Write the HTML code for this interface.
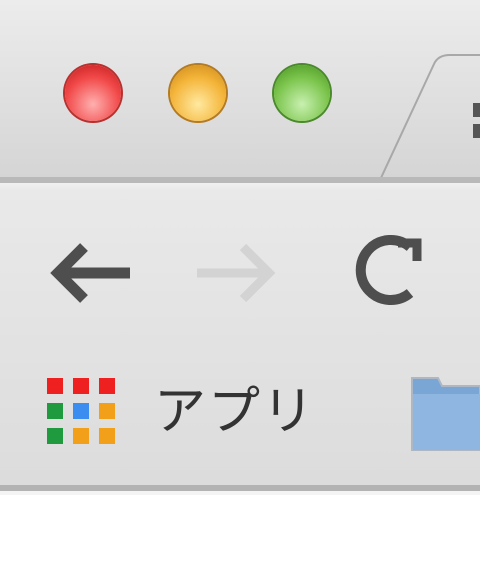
<!DOCTYPE html>
<html><head><meta charset="utf-8"><style>
html,body{margin:0;padding:0;width:480px;height:569px;overflow:hidden;background:#fff;font-family:"Liberation Sans","Noto Sans CJK JP",sans-serif}
.title{position:absolute;left:0;top:0;width:480px;height:177px;background:linear-gradient(#ececec,#d5d5d5)}
.tb{position:absolute;left:0;top:177px;width:480px;height:6px;background:#b9b9b9}
.tool{position:absolute;left:0;top:183px;width:480px;height:302px;background:linear-gradient(#f0f0f0 0px,#e9e9e9 8px,#dcdcdc 300px)}
.bb{position:absolute;left:0;top:485px;width:480px;height:6px;background:#b3b3b3}
.light{position:absolute;left:0;top:491px;width:480px;height:4px;background:#f4f4f4}
.c{position:absolute;width:56px;height:56px;border-radius:50%;top:65px}
.sq{position:absolute;width:16px;height:16px}
</style></head><body>
<div class="title"></div>
<svg style="position:absolute;left:0;top:0" width="480" height="183">
<path d="M380 180 L434 64 Q438 55 450 55 L480 55" fill="none" stroke="#a8a8a8" stroke-width="2"/>
<rect x="473" y="103" width="7" height="14" fill="#555"/>
<rect x="473" y="124" width="7" height="14" fill="#555"/>
</svg>
<div class="c" style="left:65px;background:radial-gradient(circle at 50% 70%,#ffb0b0,#f24a4a 55%,#c01818);box-shadow:0 0 0 2px #b8312f"></div>
<div class="c" style="left:170px;background:radial-gradient(circle at 50% 70%,#ffe9a0,#f4b53a 55%,#c98515);box-shadow:0 0 0 2px #b47b22"></div>
<div class="c" style="left:274px;background:radial-gradient(circle at 50% 70%,#c8f0b0,#7cc54d 55%,#45921f);box-shadow:0 0 0 2px #4b8a2b"></div>
<div class="tb"></div>
<div class="tool"></div>
<div class="bb"></div><div class="light"></div>
<svg style="position:absolute;left:0;top:183px" width="480" height="302">
<path d="M130 90 L62 90 M84 64 L58 90 L84 116" fill="none" stroke="#4e4e4e" stroke-width="11"/>
<path d="M197 90 L266 90 M243 64 L269 90 L243 116" fill="none" stroke="#d3d3d3" stroke-width="9"/>
<path d="M410 64 A30 30 0 1 0 410 110" fill="none" stroke="#4e4e4e" stroke-width="10"/>
<path d="M398 60 L417 60 L417 78" fill="none" stroke="#4e4e4e" stroke-width="9"/>
</svg>
<div class="sq" style="left:47px;top:378px;background:#ee2020"></div>
<div class="sq" style="left:73px;top:378px;background:#ee2020"></div>
<div class="sq" style="left:99px;top:378px;background:#ee2020"></div>
<div class="sq" style="left:47px;top:403px;background:#1f9a3e"></div>
<div class="sq" style="left:73px;top:403px;background:#3b8ef0"></div>
<div class="sq" style="left:99px;top:403px;background:#f2a01a"></div>
<div class="sq" style="left:47px;top:428px;background:#1f9a3e"></div>
<div class="sq" style="left:73px;top:428px;background:#f2a01a"></div>
<div class="sq" style="left:99px;top:428px;background:#f2a01a"></div>
<div style="position:absolute;left:154px;top:380px;font-size:52px;line-height:64px;color:#333;letter-spacing:2px">アプリ</div>
<svg style="position:absolute;left:408px;top:374px" width="72" height="78">
<path d="M4 4 L30 4 L34 12 L72 12 L72 76 L4 76 Z" fill="#7aa6d6" stroke="#aeb8c4" stroke-width="2"/>
<rect x="5" y="20" width="67" height="56" fill="#8fb6e0"/>
</svg>
</body></html>
